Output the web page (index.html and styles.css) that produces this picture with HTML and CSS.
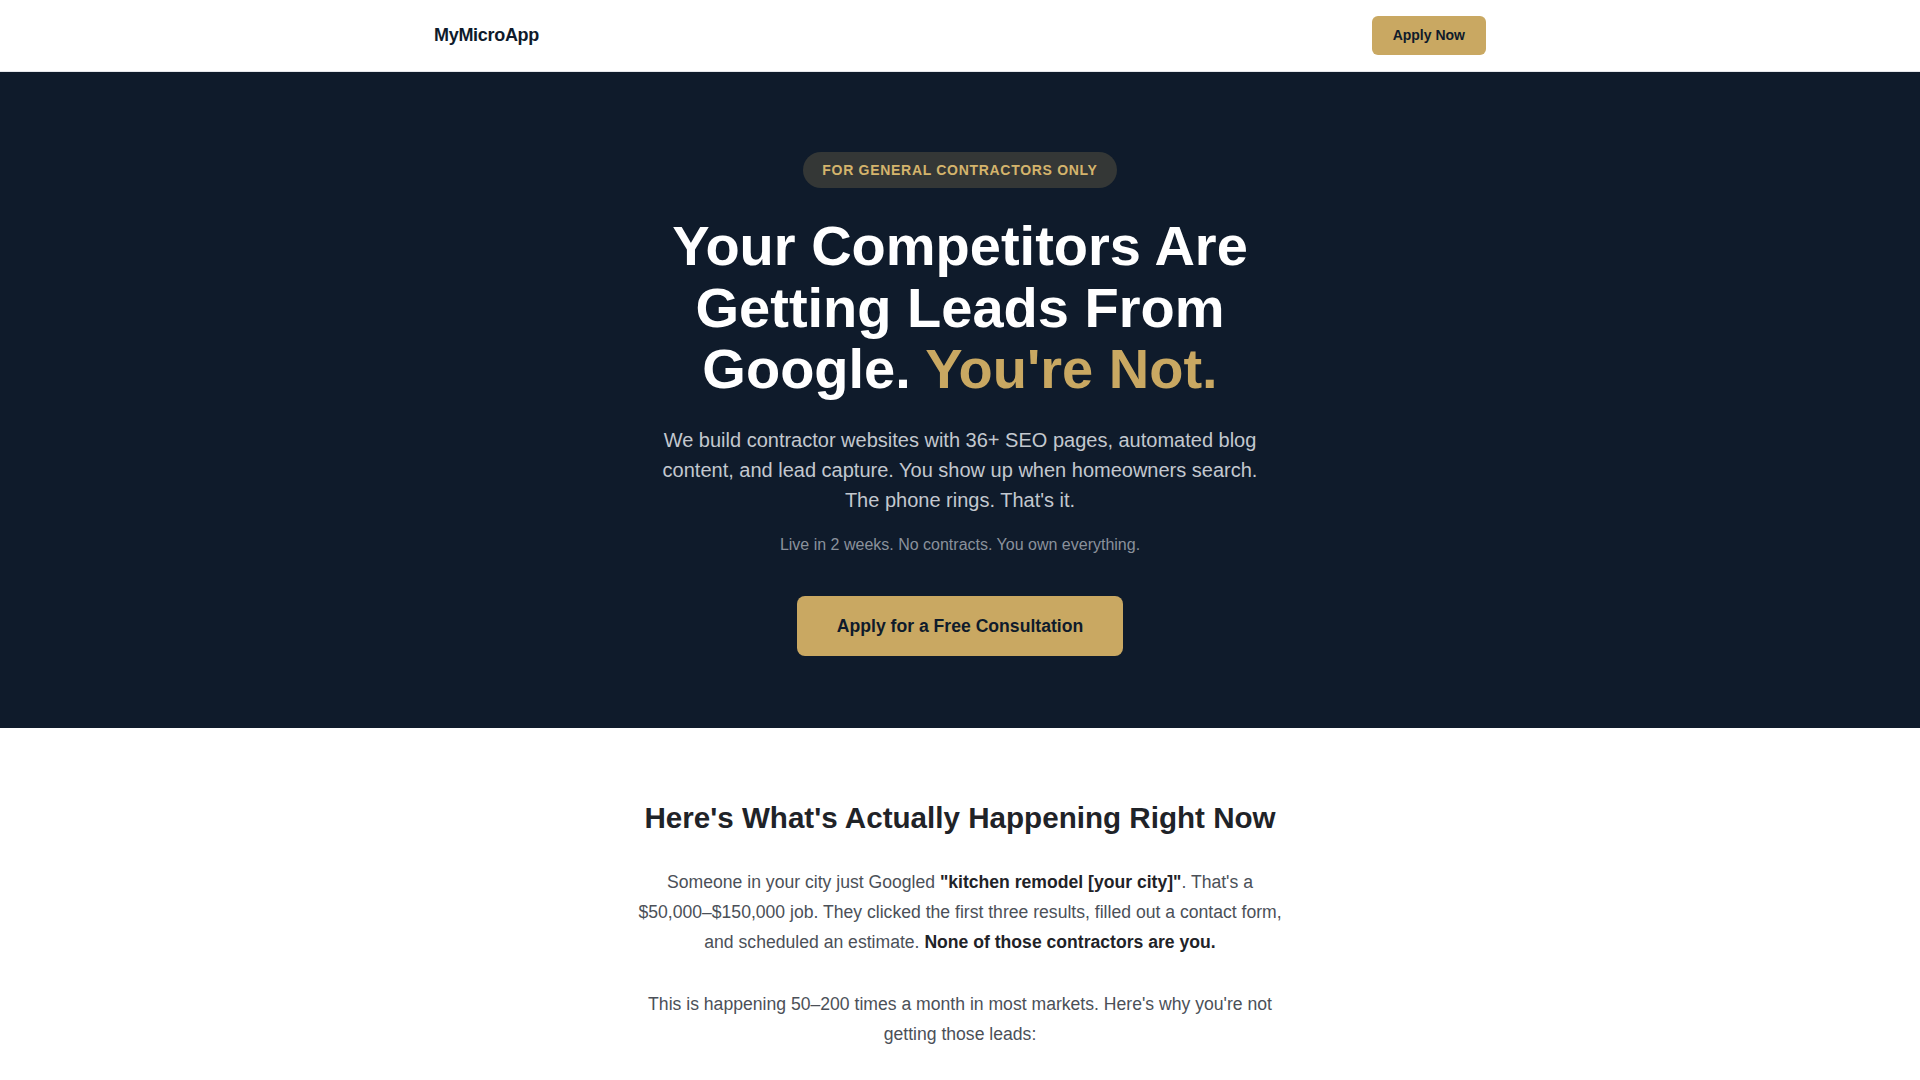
FILE: index.html
```html
<!DOCTYPE html>
<html lang="en">
<head>
<meta charset="utf-8">
<title>MyMicroApp</title>
<link rel="stylesheet" href="styles.css">
</head>
<body>
<header class="nav">
  <div class="container nav-inner">
    <a class="logo" href="#">MyMicroApp</a>
    <a class="btn btn-small" href="#">Apply Now</a>
  </div>
</header>
<section class="hero">
  <div class="hero-inner">
    <span class="badge">FOR GENERAL CONTRACTORS ONLY</span>
    <h1 class="hero-title">Your Competitors Are Getting Leads From Google. <span class="accent">You're Not.</span></h1>
    <p class="hero-lead">We build contractor websites with 36+ SEO pages, automated blog content, and lead capture. You show up when homeowners search. The phone rings. That's it.</p>
    <p class="hero-note">Live in 2 weeks. No contracts. You own everything.</p>
    <a class="btn btn-large" href="#">Apply for a Free Consultation</a>
  </div>
</section>
<section class="problem">
  <h2 class="section-title">Here's What's Actually Happening Right Now</h2>
  <p class="section-text">Someone in your city just Googled <strong>"kitchen remodel [your city]"</strong>. That's a $50,000–$150,000 job. They clicked the first three results, filled out a contact form, and scheduled an estimate. <strong>None of those contractors are you.</strong></p>
  <p class="section-text">This is happening 50–200 times a month in most markets. Here's why you're not getting those leads:</p>
</section>
</body>
</html>
```
FILE: styles.css
```css
* { box-sizing: border-box; }
html, body { margin: 0; padding: 0; }
body {
  font-family: "Liberation Sans", Arial, sans-serif;
  background: #ffffff;
  color: #1f2328;
}
a { text-decoration: none; }

.container {
  max-width: 1100px;
  margin: 0 auto;
  padding: 0 24px;
}

.nav {
  background: #ffffff;
  border-bottom: 1px solid #e5e7eb;
}
.nav-inner {
  display: flex;
  align-items: center;
  justify-content: space-between;
  padding-top: 16px;
  padding-bottom: 16px;
}
.logo {
  font-size: 18px;
  font-weight: 700;
  letter-spacing: -0.3px;
  color: #0f1b2b;
}

.btn {
  display: inline-block;
  background: #c9a862;
  color: #0f1b2b;
  font-weight: 700;
}
.btn-small {
  font-size: 14px;
  line-height: 19px;
  padding: 10px 21px;
  border-radius: 6px;
}
.btn-large {
  font-size: 17.6px;
  line-height: 24px;
  padding: 18px 40px;
  border-radius: 8px;
  margin-top: 39px;
}

.hero {
  background: #0f1b2b;
  padding: 80px 24px 72px;
}
.hero-inner {
  display: flex;
  flex-direction: column;
  align-items: center;
  text-align: center;
}
.badge {
  display: inline-block;
  background: rgba(201, 168, 98, 0.2);
  color: #d4b46c;
  font-size: 14px;
  line-height: 20px;
  font-weight: 700;
  letter-spacing: 0.05em;
  padding: 8px 19px;
  border-radius: 999px;
  margin-bottom: 27px;
}
.hero-title {
  margin: 0;
  max-width: 720px;
  font-size: 56px;
  line-height: 1.1;
  font-weight: 700;
  color: #ffffff;
}
.accent { color: #c9a862; }
.hero-lead {
  margin: 25px 0 0;
  max-width: 600px;
  font-size: 20px;
  line-height: 30px;
  color: #c3c8cf;
}
.hero-note {
  margin: 18px 0 0;
  font-size: 16px;
  line-height: 24px;
  color: #8a919b;
}

.problem {
  padding: 72px 24px 40px;
  display: flex;
  flex-direction: column;
  align-items: center;
  text-align: center;
}
.section-title {
  margin: 0 0 31px;
  font-size: 29.6px;
  line-height: 36px;
  font-weight: 700;
  color: #1f2328;
}
.section-text {
  margin: 0 0 32px;
  max-width: 660px;
  font-size: 17.6px;
  line-height: 30px;
  color: #4b5058;
}
.section-text strong { color: #1f2328; }
```
